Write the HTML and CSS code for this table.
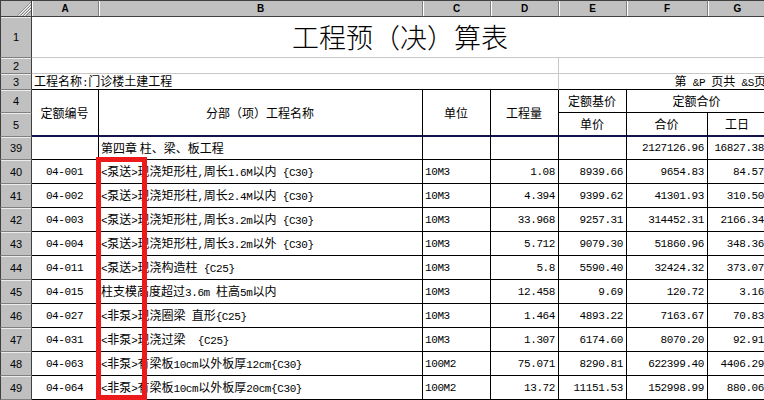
FILE: index.html
```html
<!DOCTYPE html>
<html lang="zh-CN">
<head>
<meta charset="utf-8">
<title>工程预（决）算表</title>
<link rel="stylesheet" href="styles.css">
</head>
<body>
<div class="sheet">
  <div class="corner"><svg width="31" height="16" viewBox="0 0 31 16"><g stroke="#808080" stroke-width="1"><line x1="17" y1="16" x2="31" y2="2"/><line x1="20" y1="16" x2="31" y2="5"/><line x1="23" y1="16" x2="31" y2="8"/><line x1="26" y1="16" x2="31" y2="11"/></g><g stroke="#ffffff" stroke-width="1"><line x1="18" y1="16" x2="31" y2="3"/><line x1="21" y1="16" x2="31" y2="6"/><line x1="24" y1="16" x2="31" y2="9"/></g></svg></div>
  <div class="ch">A</div>
  <div class="ch">B</div>
  <div class="ch">C</div>
  <div class="ch">D</div>
  <div class="ch">E</div>
  <div class="ch">F</div>
  <div class="ch">G</div>

  <div class="rh">1</div>
  <div class="title s7">工程预（决）算表</div>

  <div class="rh">2</div>
  <div class="lt s4"></div>
  <div class="lt s3 nr"></div>

  <div class="rh">3</div>
  <div class="lt s4 tb"><span class="t">工程名称<span class="m">:</span>门诊楼土建工程</span></div>
  <div class="lt s3 nr tb r"><span class="t">第<span class="m"> &amp;P </span>页共<span class="m"> &amp;S</span>页</span></div>

  <div class="rh">4</div>
  <div class="c ctr v2 hb">定额编号</div>
  <div class="c ctr v2 hb">分部（项）工程名称</div>
  <div class="c ctr v2 hb">单位</div>
  <div class="c ctr v2 hb">工程量</div>
  <div class="c ctr">定额基价</div>
  <div class="c ctr s2">定额合价</div>

  <div class="rh">5</div>
  <div class="c ctr hb">单价</div>
  <div class="c ctr hb">合价</div>
  <div class="c ctr hb">工日</div>

  <div class="rh">39</div>
  <div class="c"></div>
  <div class="c"><span class="t">第四章 柱、梁、板工程</span></div>
  <div class="c"></div>
  <div class="c"></div>
  <div class="c"></div>
  <div class="c r m">2127126.96</div>
  <div class="c r m">16827.38</div>

  <div class="rh">40</div>
  <div class="c ctr m">04-001</div>
  <div class="c"><span class="t"><span class="m">&lt;</span>泵送<span class="m">&gt;</span>现浇矩形柱<span class="m">,</span>周长<span class="m">1.6M</span>以内<span class="m"> {C30}</span></span></div>
  <div class="c m">10M3</div>
  <div class="c r m">1.08</div>
  <div class="c r m">8939.66</div>
  <div class="c r m">9654.83</div>
  <div class="c r m">84.57</div>

  <div class="rh">41</div>
  <div class="c ctr m">04-002</div>
  <div class="c"><span class="t"><span class="m">&lt;</span>泵送<span class="m">&gt;</span>现浇矩形柱<span class="m">,</span>周长<span class="m">2.4M</span>以内<span class="m"> {C30}</span></span></div>
  <div class="c m">10M3</div>
  <div class="c r m">4.394</div>
  <div class="c r m">9399.62</div>
  <div class="c r m">41301.93</div>
  <div class="c r m">310.50</div>

  <div class="rh">42</div>
  <div class="c ctr m">04-003</div>
  <div class="c"><span class="t"><span class="m">&lt;</span>泵送<span class="m">&gt;</span>现浇矩形柱<span class="m">,</span>周长<span class="m">3.2m</span>以内<span class="m"> {C30}</span></span></div>
  <div class="c m">10M3</div>
  <div class="c r m">33.968</div>
  <div class="c r m">9257.31</div>
  <div class="c r m">314452.31</div>
  <div class="c r m">2166.34</div>

  <div class="rh">43</div>
  <div class="c ctr m">04-004</div>
  <div class="c"><span class="t"><span class="m">&lt;</span>泵送<span class="m">&gt;</span>现浇矩形柱<span class="m">,</span>周长<span class="m">3.2m</span>以外<span class="m"> {C30}</span></span></div>
  <div class="c m">10M3</div>
  <div class="c r m">5.712</div>
  <div class="c r m">9079.30</div>
  <div class="c r m">51860.96</div>
  <div class="c r m">348.36</div>

  <div class="rh">44</div>
  <div class="c ctr m">04-011</div>
  <div class="c"><span class="t"><span class="m">&lt;</span>泵送<span class="m">&gt;</span>现浇构造柱<span class="m"> {C25}</span></span></div>
  <div class="c m">10M3</div>
  <div class="c r m">5.8</div>
  <div class="c r m">5590.40</div>
  <div class="c r m">32424.32</div>
  <div class="c r m">373.07</div>

  <div class="rh">45</div>
  <div class="c ctr m">04-015</div>
  <div class="c"><span class="t">柱支模高度超过<span class="m">3.6m </span>柱高<span class="m">5m</span>以内</span></div>
  <div class="c m">10M3</div>
  <div class="c r m">12.458</div>
  <div class="c r m">9.69</div>
  <div class="c r m">120.72</div>
  <div class="c r m">3.16</div>

  <div class="rh">46</div>
  <div class="c ctr m">04-027</div>
  <div class="c"><span class="t"><span class="m">&lt;</span>非泵<span class="m">&gt;</span>现浇圈梁<span class="m"> </span>直形<span class="m">{C25}</span></span></div>
  <div class="c m">10M3</div>
  <div class="c r m">1.464</div>
  <div class="c r m">4893.22</div>
  <div class="c r m">7163.67</div>
  <div class="c r m">70.83</div>

  <div class="rh">47</div>
  <div class="c ctr m">04-031</div>
  <div class="c"><span class="t"><span class="m">&lt;</span>非泵<span class="m">&gt;</span>现浇过梁<span class="m">&nbsp;&nbsp;{C25}</span></span></div>
  <div class="c m">10M3</div>
  <div class="c r m">1.307</div>
  <div class="c r m">6174.60</div>
  <div class="c r m">8070.20</div>
  <div class="c r m">92.91</div>

  <div class="rh">48</div>
  <div class="c ctr m">04-063</div>
  <div class="c"><span class="t"><span class="m">&lt;</span>非泵<span class="m">&gt;</span>有梁板<span class="m">10cm</span>以外板厚<span class="m">12cm{C30}</span></span></div>
  <div class="c m">100M2</div>
  <div class="c r m">75.071</div>
  <div class="c r m">8290.81</div>
  <div class="c r m">622399.40</div>
  <div class="c r m">4406.29</div>

  <div class="rh">49</div>
  <div class="c ctr m">04-064</div>
  <div class="c"><span class="t"><span class="m">&lt;</span>非泵<span class="m">&gt;</span>有梁板<span class="m">10cm</span>以外板厚<span class="m">20cm{C30}</span></span></div>
  <div class="c m">100M2</div>
  <div class="c r m">13.72</div>
  <div class="c r m">11151.53</div>
  <div class="c r m">152998.99</div>
  <div class="c r m">880.06</div>

  <div class="mark"></div>
</div>
</body>
</html>
```

FILE: styles.css
```css
html, body {
  margin: 0;
  padding: 0;
  background: #ffffff;
  overflow: hidden;
}

.sheet {
  position: relative;
  display: grid;
  grid-template-columns: 32px 67px 324px 68px 68px 68px 81px 60px;
  grid-template-rows: 17px 41px 16px 16px 23px 24px 23px repeat(10, 24px);
  width: 768px;
  font-family: "Noto Sans CJK SC", "Noto Sans", sans-serif;
  font-size: 12px;
  line-height: 14px;
  color: #000000;
}

.sheet > div {
  box-sizing: border-box;
  display: flex;
  align-items: center;
  white-space: nowrap;
  overflow: hidden;
  min-width: 0;
}

.m {
  font-family: "Liberation Mono", monospace;
  font-size: 11px;
  letter-spacing: -0.4px;
}

.t {
  white-space: pre;
}

/* corner and headers */
.corner {
  background: #c0c0c0;
  border-top: 1px solid #404040;
  border-left: 1px solid #404040;
  border-right: 1px solid #404040;
  border-bottom: 1px solid #404040;
  align-items: flex-end !important;
  justify-content: flex-end;
}
.corner svg {
  display: block;
}

.ch {
  background: #c0c0c0;
  border-top: 1px solid #404040;
  border-right: 1px solid #808080;
  border-bottom: 1px solid #404040;
  box-shadow: inset 1px 0 0 #ffffff;
  justify-content: center;
  font-family: "Liberation Sans", Arial, sans-serif;
  font-weight: bold;
  font-size: 10px;
  line-height: 12px;
}

.rh {
  background: #c0c0c0;
  border-left: 1px solid #404040;
  border-right: 1px solid #404040;
  border-bottom: 1px solid #808080;
  box-shadow: inset 0 1px 0 #ececec;
  justify-content: center;
  font-family: "Liberation Sans", Arial, sans-serif;
  font-size: 11px;
  line-height: 12px;
}

/* spans */
.s2 { grid-column: span 2; }
.s3 { grid-column: span 3; }
.s4 { grid-column: span 4; }
.s7 { grid-column: span 7; }
.v2 { grid-row: span 2; }

/* title row */
.title {
  justify-content: center;
  border-bottom: 1px solid #c8c8c8;
  font-size: 27px;
  line-height: 32px;
  font-weight: 300;
}

/* light grid cells */
.sheet > .lt {
  border-right: 1px solid #c8c8c8;
  border-bottom: 1px solid #c8c8c8;
  padding: 0 2px;
  overflow: visible;
  line-height: 13px;
}
.sheet > .nr { border-right: none; }
.sheet > .tb { border-bottom: 1px solid #000000; }

/* table cells */
.c {
  border-right: 1px solid #000000;
  border-bottom: 1px solid #000000;
  padding: 0 3px 0 2px;
}
.hb { border-bottom: 2px solid #14144a; }

.ctr { justify-content: center; }
.r { justify-content: flex-end; }

/* red highlight overlay */
.mark {
  position: absolute;
  left: 96px;
  top: 157px;
  width: 51px;
  height: 243px;
  border: 5px solid #ec1a1a;
  box-sizing: border-box;
}
```
